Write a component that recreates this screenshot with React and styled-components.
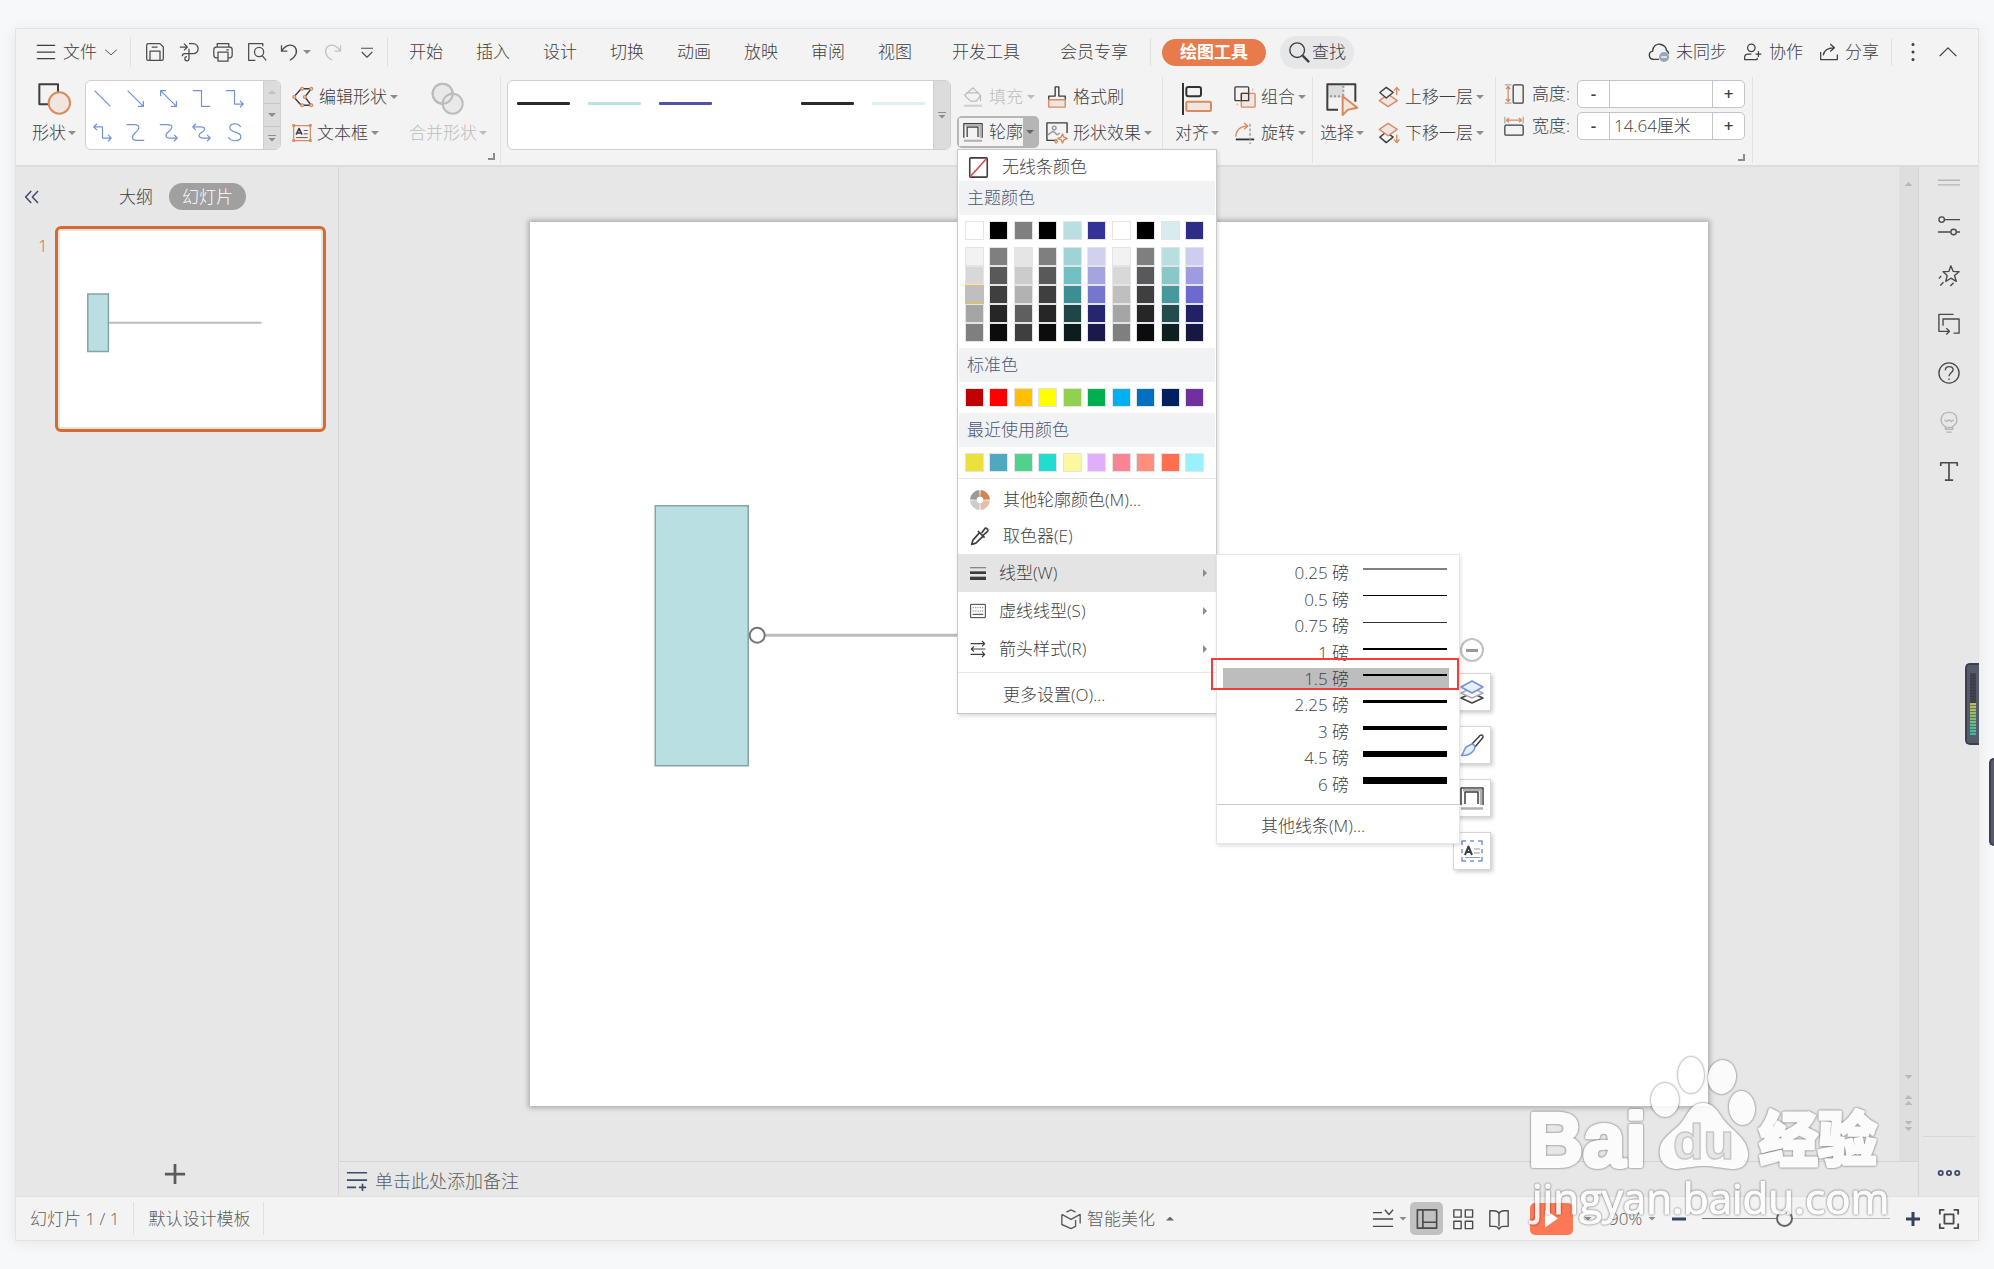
import React, { useState } from "react";
import styled, { createGlobalStyle } from "styled-components";

const GlobalStyle = createGlobalStyle`
  * {
    box-sizing: border-box;
  }
  body {
    margin: 0;
    background: #f6f8fa;
    color: #3e3e3e;
    font-family: "Open Sans", "Noto Sans CJK SC", sans-serif;
    font-size: 17px;
    font-weight: 300;
    line-height: 24px;
  }
  button, input, select {
    margin: 0;
    padding: 0;
    border: 0;
    background: none;
    color: inherit;
    font: inherit;
  }
  button {
    cursor: pointer;
    white-space: nowrap;
  }
`;

const ORANGE = "#d98b5f";
const PEACH = "#f1e6df";

const icons = {
  menu: <path d="M1 4H23M1 12H23M1 20H23" />,
  chevronDown: <path d="M2 8L12 17L22 8" />,
  chevronUp: <path d="M2 17L12 7L22 17" />,
  save: (
    <>
      <path d="M2 4a2 2 0 0 1 2-2H18L22 6V20a2 2 0 0 1-2 2H4a2 2 0 0 1-2-2Z" />
      <path d="M6 22V11H18V22M8 6H15" />
    </>
  ),
  exportPdf: (
    <>
      <path d="M1 6H9M6 2L10 6L6 10" />
      <path d="M12 2H17a5.500 5.500 0 0 1 0 12H7a3 3 0 0 0-3 3" />
      <path d="M12 8V20a2.500 2.500 0 1 1-2.500-2.500" />
    </>
  ),
  print: (
    <>
      <path d="M5 6V2H19V6M6 19H4a3 3 0 0 1-3-3V9a3 3 0 0 1 3-3H20a3 3 0 0 1 3 3V16a3 3 0 0 1-3 3H18" />
      <path d="M6 12H18V23H6ZM16 9.500H19" />
    </>
  ),
  preview: (
    <>
      <path d="M10 22H2V2H19V5" />
      <circle cx="14.500" cy="12" r="5.500" />
      <path d="M18 16L23 22" />
    </>
  ),
  undo: <path d="M3 4V11H10M3 11C8 3 15 2 19 6C23 11 21 17 13 22" />,
  redo: <path d="M21 4V11H14M21 11C16 3 9 2 5 6C1 11 3 17 11 22" />,
  moreDown: <path d="M4 7H20M5 12L12 19L19 12" />,
  search: (
    <>
      <circle cx="10" cy="10" r="8" />
      <path d="M16 16L23 23" strokeWidth="2.500" />
    </>
  ),
  cloud: (
    <>
      <path d="M12 20H6a4.500 4.500 0 0 1-1-8.900C5 6 9 3 13 3.500C17 4 20 7 20 10C21.500 11 22.500 12 22.500 14" />
      <circle cx="17.500" cy="17.500" r="5.500" fill="#9aa5b8" stroke="none" />
      <path d="M14.500 17.500H20.500" stroke="#fff" />
    </>
  ),
  person: (
    <>
      <circle cx="10" cy="7" r="4.500" />
      <path d="M10 14.500H6a4 4 0 0 0-4 4V21H17V19M15 14.500H22M18.500 11V18" />
    </>
  ),
  share: <path d="M2 12V21H22V15M5 16C6 10 11 7 18 7M13.500 2.500L18.500 7L13.500 11.500" />,
  dots: (
    <g fill="currentColor" stroke="none">
      <circle cx="12" cy="2" r="2" />
      <circle cx="12" cy="12" r="2" />
      <circle cx="12" cy="22" r="2" />
    </g>
  ),
  shapes: (
    <>
      <path d="M1 1H15V16H1Z" />
      <circle cx="16" cy="15" r="8" fill={PEACH} stroke={ORANGE} />
    </>
  ),
  merge: (
    <g fill="#e9e9e9">
      <circle cx="8" cy="8" r="7.500" />
      <circle cx="15.500" cy="15.500" r="7.500" />
      <circle cx="8" cy="8" r="7.500" fill="none" />
    </g>
  ),
  editShape: (
    <>
      <path d="M10 3L2 12L10 21M10 3H21L14 12L21 21H10" />
      <g stroke={ORANGE} fill={PEACH}>
        <circle cx="11" cy="3" r="1.500" />
        <circle cx="21" cy="3" r="1.500" />
        <circle cx="2.500" cy="12" r="1.500" />
        <circle cx="14" cy="12" r="1.500" />
        <circle cx="11" cy="21" r="1.500" />
        <circle cx="21" cy="21" r="1.500" />
      </g>
    </>
  ),
  textBox: (
    <>
      <path d="M2 3H22V21H2Z" stroke={ORANGE} />
      <g stroke={ORANGE} fill="#f3f3f3">
        <path d="M1 2h2v2h-2zM21 2h2v2h-2zM1 20h2v2h-2zM21 20h2v2h-2z" />
      </g>
      <path d="M5 14L8.500 6.500L12 14M6 12H11" strokeWidth="1.800" />
      <path d="M14 9H19M14 13H19M5 17.500H19" strokeWidth="1" />
    </>
  ),
  bucket: (
    <>
      <path d="M12 1L2 10L9 17H16L21 10Z" />
      <path d="M4 7H19M21 10V17" />
      <path d="M1 22.500H23" strokeWidth="2.500" stroke="#d0d0d0" />
    </>
  ),
  outline: (
    <>
      <path d="M1 19V2H23V19" strokeWidth="1.500" />
      <path d="M21 19V4H3" strokeWidth="2.500" stroke="#b0b0b0" />
      <path d="M5 18V6H18V18" strokeWidth="1.500" />
      <path d="M1 22.500H23" strokeWidth="2.500" stroke="#b0b0b0" />
    </>
  ),
  brush: (
    <>
      <path d="M10 1H14V11H21V15H3V11H10Z" />
      <path d="M3 15H21V23H3Z" stroke={ORANGE} fill={PEACH} />
    </>
  ),
  effect: (
    <>
      <path d="M12 20H1V1H23V12" />
      <path d="M2 14L8 10L12 14L15 12" stroke="#999" />
      <circle cx="9" cy="6.500" r="2" stroke="#999" />
      <path d="M18 13L19.500 16.500L23 18L19.500 19.500L18 23L16.500 19.500L13 18L16.500 16.500ZM11 19L12.500 21L11 23L9.500 21Z" stroke={ORANGE} />
    </>
  ),
  align: (
    <>
      <path d="M1.500 0V24" strokeWidth="1.500" stroke="#333" />
      <rect x="4" y="3" width="11" height="7" rx="1.500" strokeWidth="1.500" stroke="#333" />
      <rect x="4" y="14" width="18.500" height="7" rx="1" fill={PEACH} stroke={ORANGE} strokeWidth="1.500" />
    </>
  ),
  group: (
    <>
      <rect x="1" y="1" width="15" height="15" rx="1" />
      <rect x="8" y="8" width="15" height="15" rx="1" fill={PEACH} stroke={ORANGE} />
      <path d="M8 16V8H16V16Z" />
      <path d="M20 4h1M3 20h1" stroke={ORANGE} strokeWidth="2" />
    </>
  ),
  rotate: (
    <>
      <path d="M2 16C2 9 7 4.500 14 4.500M11 1L15 4.500L11 8" stroke={ORANGE} />
      <path d="M2 19H22" stroke="#333" strokeWidth="2" />
      <path d="M17.500 2V24" stroke="#999" strokeDasharray="3 2" />
    </>
  ),
  select: (
    <>
      <path d="M1 1H13V11H1Z" fill="#dcdcdc" stroke="none" />
      <path d="M9 20H1V1H22V14" />
      <path d="M3 10H13M13 2V10" stroke="#999" strokeDasharray="1.500 1.500" />
      <path d="M12.500 10V24L16.500 20L23.500 18.500Z" stroke={ORANGE} fill={PEACH} />
    </>
  ),
  moveUp: (
    <>
      <path d="M11 9L21 16L11 22.500L1.500 16Z" fill={PEACH} stroke={ORANGE} />
      <path d="M9 1.500L16.500 7L9 13L2 7Z" fill="#f3f3f3" />
      <path d="M20.500 10V2M17.500 5L20.500 1.500L23.500 5" stroke={ORANGE} />
    </>
  ),
  moveDown: (
    <>
      <path d="M9 11L16.500 16.500L9 22.500L2 16.500Z" />
      <path d="M11 1.500L21 8L11 15L1.500 8Z" fill={PEACH} stroke={ORANGE} />
      <path d="M20.500 14V22M17.500 19L20.500 22.500L23.500 19" stroke={ORANGE} />
    </>
  ),
  height: (
    <>
      <rect x="11" y="1" width="12" height="22" rx="1.500" />
      <path d="M5 3V21M2.500 6L5 3L7.500 6M2.500 18L5 21L7.500 18" stroke={ORANGE} />
      <path d="M1 1H9M1 23H9" stroke="#aaa" />
    </>
  ),
  width: (
    <>
      <rect x="1" y="11" width="22" height="12" rx="1.500" />
      <path d="M3 5H21M6 2.500L3 5L6 7.500M18 2.500L21 5L18 7.500" stroke={ORANGE} />
      <path d="M1 1V9M23 1V9" stroke="#aaa" />
    </>
  ),
  noLine: (
    <>
      <rect x="2" y="1" width="20" height="22" rx="1" strokeWidth="1.800" />
      <path d="M2.500 22.500L21.500 1.500" stroke="#d9484c" strokeWidth="1.800" />
    </>
  ),
  wheel: (
    <g strokeWidth="8" strokeLinecap="butt">
      <path d="M4 11.500A8 8 0 0 1 11.500 4" stroke="#9b9b9b" />
      <path d="M12.500 4A8 8 0 0 1 20 11.500" stroke="#cf8653" />
      <path d="M20 12.500A8 8 0 0 1 12.500 20" stroke="#e6bfa9" />
      <path d="M11.500 20A8 8 0 0 1 4 12.500" stroke="#cccccc" />
    </g>
  ),
  picker: (
    <>
      <path d="M11.500 8L3.500 17L2 22L7 20.500L15.500 12.500" strokeWidth="2" />
      <path d="M9.500 6L17.500 14M14 8.500L17.500 3.500C19 1 23 4.500 21 6.500L16 11" strokeWidth="2" />
    </>
  ),
  weight: (
    <g stroke="#3c3c3c" strokeLinecap="butt">
      <path d="M0 4H24" strokeWidth="2" stroke="#888" />
      <path d="M0 11.500H24" strokeWidth="4" />
      <path d="M0 20H24" strokeWidth="5" />
    </g>
  ),
  dash: (
    <>
      <path d="M1 2H23V22H1Z" />
      <path d="M4 7H20M4 12H20" strokeDasharray="2 1.500" stroke="#888" />
      <path d="M4 17H20" />
    </>
  ),
  arrows: (
    <path
      d="M1 4H22M18 0L22 4L18 8M23 12H2M6 8L2 12L6 16M1 20H22M18 16L22 20L18 24"
      strokeWidth="1.800"
    />
  ),
  collapse: <path d="M11 4L3.500 12L11 20M20 4L12.500 12L20 20" stroke="#3f4a66" strokeWidth="2" />,
  plus: <path d="M12 1V23M1 12H23" strokeWidth="3" />,
  note: <path d="M1 3H23M1 11H23M1 19H11M14 19H22M18 15V23" strokeWidth="1.800" />,
  cube: <path d="M7 4.500L12 2L17 4.500M2 7V18L12 22.500L17 20V13M22 17V7L12 12.500L2 7" />,
  listCheck: <path d="M1 5H11M1 12H23M1 20H23M14 2L18.500 7L23 2" />,
  normalView: <path d="M1.500 2H22.500V22H1.500ZM7.500 2V22M7.500 15.500H22.500" strokeWidth="1.800" />,
  grid: <path d="M2 2H10V10H2ZM14.500 2H22.500V10H14.500ZM2 14.500H10V22.500H2ZM14.500 14.500H22.500V22.500H14.500Z" />,
  book: <path d="M12 6C11 4 9 3 6 3H2V20H7C9 20 11 21 12 23C13 21 15 20 17 20H22V3H18C15 3 13 4 12 6V20" />,
  fit: <path d="M2 7V2H7M17 2H22V7M22 17V22H17M7 22H2V17M7 7H17V17H7Z" strokeWidth="2" />,
  handle: <path d="M0 9H24M0 14H24" />,
  sliders: (
    <>
      <circle cx="4" cy="5" r="3" />
      <path d="M7 5H24M0 18.500H14M20 18.500H24" />
      <circle cx="17" cy="18.500" r="3" />
    </>
  ),
  star: (
    <>
      <path d="M14 2L16.500 8L23 8.500L18 12.500L20 19L14 15.500L8.500 19L10 12.500L5.500 8.500L12 8Z" />
      <path d="M3.500 13L1 16M6 20L2.500 23.500M17 20.500L13.500 24" />
    </>
  ),
  transition: <path d="M17 1.500H1V20H12M9 16.500L12.500 20L9 23.500M5.500 14V6.500H23V22H17" />,
  help: (
    <>
      <circle cx="12" cy="12" r="11" />
      <path d="M8 9C8 3.500 16.500 4 16.500 8.500C16.500 11.500 12 12 12 15.500M12 18V19.500" />
    </>
  ),
  bulb: (
    <>
      <path d="M8 17C1 13 2 1.500 12 1.500C22 1.500 23 13 16 17V20H8ZM8 18H16M9 23H15" />
      <path d="M7 9.500L9.500 11.500L12 9.500L14.500 11.500L17 9.500" />
    </>
  ),
  text: <path d="M3 6.500V3H21V6.500M12 3V22M7.500 22H16.500" strokeWidth="1.800" />,
  rings: (
    <g strokeWidth="2">
      <circle cx="3" cy="12" r="2.300" />
      <circle cx="12" cy="12" r="2.300" />
      <circle cx="21" cy="12" r="2.300" />
    </g>
  ),
  layers: (
    <>
      <path d="M12 13L23 18L12 23L1 18Z" fill="#fff" stroke="#444" />
      <path d="M12 8L23 13L12 18L1 13Z" fill="#fff" stroke="#aaa" />
      <path d="M12 1L23 7L12 13L1 7Z" fill="#e8eefa" stroke="#6f97dc" />
    </>
  ),
  paint: (
    <>
      <path d="M12 11L20 2.500C22 1 24 3 22.500 5L15 14" />
      <path d="M12 11C15 12 15 13 15 14L14 17C11 21 6 23 1.500 22.500C5 19 3 15 8 13Z" fill="#e8eefa" stroke="#6f97dc" />
    </>
  ),
  textFrame: (
    <>
      <path d="M6 2H2V6M10 2H14M18 2H22V6M22 10V14M22 18V22H18M14 22H10M6 22H2V18M2 14V10" stroke="#6f97dc" strokeWidth="1.500" />
      <path d="M5 16L8.500 7.500L12 16M6 13H11" strokeWidth="2" />
      <path d="M14 10H20M14 14H20M5 18.500H20" stroke="#999" strokeWidth="1" />
    </>
  ),
};

const connectors = [
  "M2 2L22 22",
  "M2 2L22 22M22 15V22H15",
  "M2 2L22 22M22 15V22H15M2 9V2H9",
  "M1 2H12V22H23",
  "M1 2H12V19H23M19 15L23 19L19 23",
  "M1 5H12V19H23M19 15L23 19L19 23M5 1L1 5L5 9",
  "M1 2H10C20 2 16 9 12 12C7 16 6 22 14 22H23",
  "M1 2H10C20 2 16 8 12 11C7 15 8 19 14 19H23M19 15L23 19L19 23",
  "M1 5H10C18 5 17 9 12 12C7 15 8 19 14 19H23M19 15L23 19L19 23M5 1L1 5L5 9",
  "M20 5C16 -1 6 0 6 6C6 13 20 10 20 17C20 24 8 24 4 18",
];

const Glyph = styled.svg`
  flex: none;
  display: block;
  width: ${(p) => p.$size}px;
  height: ${(p) => p.$size}px;
  fill: none;
  stroke: currentColor;
  stroke-width: 1.5;
  stroke-linejoin: round;
  overflow: visible;
`;

const Icon = ({ name, size = 22 }) => (
  <Glyph viewBox="0 0 24 24" $size={size} aria-hidden="true">
    {icons[name]}
  </Glyph>
);

const Caret = styled.span`
  flex: none;
  width: 8px;
  height: 4px;
  background: ${(p) => p.$color || "#8c8c8c"};
  clip-path: ${(p) =>
    p.$up
      ? "polygon(0 100%, 100% 100%, 50% 0)"
      : "polygon(0 0, 100% 0, 50% 100%)"};
`;

const Page = styled.div`
  position: relative;
  display: flex;
  min-height: 100vh;
  padding: 28px 15px;
`;

const Window = styled.div`
  position: relative;
  flex: 1;
  min-width: 0;
  display: flex;
  flex-direction: column;
  border: 1px solid #e2e3e5;
  background: #e7e7e7;
  box-shadow: 0 2px 14px rgba(0, 0, 0, 0.08);
`;

const Ribbon = styled.header`
  position: relative;
  z-index: 5;
  background: #f3f3f3;
  border-bottom: 2px solid #dcdcdc;
`;

const TopRow = styled.div`
  display: flex;
  align-items: center;
  height: 46px;
  padding: 0 20px;
`;

const Divider = styled.span`
  flex: none;
  width: 1px;
  height: ${(p) => p.$height || 30}px;
  margin: ${(p) => p.$margin || "0 12px"};
  background: #e0e0e0;
`;

const FileButton = styled.button`
  display: flex;
  align-items: center;
  gap: 7px;
`;

const QuickBar = styled.div`
  display: flex;
  align-items: center;
  gap: 10px;
`;

const QuickButton = styled.button`
  display: flex;
  align-items: center;
  justify-content: center;
  gap: 4px;
  min-width: 24px;
  color: ${(p) => (p.$muted ? "#c3c3c3" : "#4c4c4c")};
`;

const Tabs = styled.nav`
  display: flex;
  gap: 33px;
  margin-left: 9px;
  a {
    color: inherit;
    text-decoration: none;
    white-space: nowrap;
  }
  a.long {
    margin-left: 7px;
  }
`;

const ActiveTab = styled.button`
  height: 27px;
  padding: 0 18px;
  border-radius: 14px;
  background: #e77b4c;
  color: #fff;
  font-weight: 700;
`;

const FindButton = styled.button`
  display: flex;
  align-items: center;
  gap: 2px;
  height: 33px;
  margin-left: 14px;
  padding: 0 8px;
  border-radius: 17px;
  background: #e6e7e9;
`;

const Account = styled.div`
  display: flex;
  align-items: center;
  gap: 16px;
  margin-left: auto;
  button {
    display: flex;
    align-items: center;
    gap: 6px;
  }
`;

const ToolRow = styled.div`
  display: flex;
  align-items: flex-start;
  height: 90px;
  padding: 4px 16px 0;
`;

const Rule = styled.span`
  flex: none;
  width: 1px;
  height: 86px;
  margin: -2px ${(p) => p.$after}px 0 ${(p) => p.$before}px;
  background: #e2e2e2;
`;

const BigTool = styled.button`
  display: flex;
  flex-direction: column;
  align-items: center;
  color: ${(p) => (p.$muted ? "#bcbcbc" : "inherit")};
  > svg {
    margin: 4px 0 0;
  }
  > span {
    display: flex;
    align-items: center;
    gap: 2px;
    height: 36px;
  }
`;

const ToolColumn = styled.div`
  display: flex;
  flex-direction: column;
  margin-left: ${(p) => p.$left || 0}px;
`;

const Tool = styled.button`
  display: flex;
  align-items: center;
  gap: 5px;
  height: 36px;
  color: ${(p) => (p.$muted ? "#bcbcbc" : "inherit")};
  > span {
    margin-left: -2px;
  }
`;

const Gallery = styled.div`
  display: flex;
  flex: none;
  height: 70px;
  margin: 1px 11px 0 9px;
  border: 1px solid #cfcfcf;
  border-radius: 6px;
  background: #fff;
  overflow: hidden;
`;

const ShapeGrid = styled.div`
  display: grid;
  grid-template-columns: repeat(5, 33px);
  width: 177px;
  color: #7093d6;
  button {
    display: grid;
    place-items: center;
  }
`;

const GallerySide = styled.div`
  display: flex;
  flex-direction: column;
  width: 17px;
  border-left: 1px solid #cfcfcf;
  background: #dcdcdc;
  button {
    flex: 1;
    display: flex;
    flex-direction: column;
    align-items: center;
    justify-content: center;
    gap: 2px;
  }
  button + button {
    border-top: 1px solid #c6c6c6;
  }
`;

const Bar = styled.span`
  width: 8px;
  height: 1px;
  background: #8c8c8c;
`;

const StyleGallery = styled(Gallery)`
  margin: 1px 6px 0 0;
`;

const StyleList = styled.div`
  display: flex;
  gap: 18px;
  width: 425px;
  padding: 21px 9px 0;
`;

const StyleSample = styled.button`
  flex: none;
  width: 53px;
  height: 3px;
  border-radius: 1px;
  background: ${(p) => p.$color};
`;

const CornerMark = styled.button`
  flex: none;
  align-self: flex-end;
  width: 7px;
  height: 7px;
  margin: ${(p) => p.$margin};
  border: solid #8c8c8c;
  border-width: 0 2px 2px 0;
`;

const FillTool = styled(Tool)`
  gap: 6px;
  padding-left: 6px;
`;

const OutlineAnchor = styled.div`
  position: relative;
`;

const OutlineTool = styled.button`
  display: flex;
  align-items: center;
  width: 82px;
  height: 32px;
  margin-top: 1px;
  border: 2px solid #b5b5b5;
  border-radius: 5px;
  background: #b5b5b5;
  span.face {
    display: flex;
    align-items: center;
    gap: 6px;
    height: 28px;
    padding: 0 0 0 4px;
    margin-right: 3px;
    background: #f3f3f3;
  }
`;

const SizeGroup = styled.div`
  display: flex;
  flex-direction: column;
  gap: 4px;
  padding-top: 1px;
`;

const SizeRow = styled.div`
  display: flex;
  align-items: center;
  gap: 8px;
  label {
    width: 37px;
    white-space: nowrap;
  }
`;

const Spinner = styled.div`
  display: flex;
  width: 168px;
  height: 28px;
  border: 1px solid #c4c4c4;
  border-radius: 5px;
  background: #fff;
  button {
    width: 31px;
    font-weight: 600;
    line-height: 20px;
  }
  input {
    flex: 1;
    min-width: 0;
    padding: 0 4px;
    border: solid #c4c4c4;
    border-width: 0 1px;
    outline: none;
  }
`;

const Menu = styled.div`
  position: absolute;
  top: 34px;
  left: 0;
  z-index: 10;
  width: 260px;
  border: 1px solid #c9c9c9;
  background: #fff;
  box-shadow: 1px 2px 4px rgba(0, 0, 0, 0.15);
`;

const MenuItem = styled.button`
  display: flex;
  align-items: center;
  width: 100%;
  height: ${(p) => p.$height || 38}px;
  padding: ${(p) => p.$top || 0}px 9px 0 ${(p) => p.$left || 12}px;
  gap: 13px;
  background: ${(p) => (p.$active ? "#e4e4e4" : "none")};
  .arrow {
    width: 4px;
    height: 8px;
    margin-left: auto;
    background: #8c8c8c;
    clip-path: polygon(0 0, 100% 50%, 0 100%);
  }
`;

const MenuHeading = styled.div`
  height: 34px;
  margin: 0 1px;
  padding-left: 8px;
  background: #f0f2f4;
  color: #4b5875;
  line-height: 33px;
`;

const Swatches = styled.div`
  display: grid;
  grid-template-columns: repeat(10, 19px);
  justify-content: space-between;
  padding: ${(p) => p.$padding || "6px 12px 6px 7px"};
`;

const Swatch = styled.button`
  height: 19px;
  border: 1px solid ${(p) => (p.$picked ? "#fbb83b" : "#e2e4e8")};
  background: ${(p) => p.$color};
`;

const MenuLine = styled.div`
  height: 1px;
  margin: ${(p) => p.$margin || "0"};
  background: ${(p) => p.$color || "#e8e8e8"};
`;

const SubmenuAnchor = styled.div`
  position: relative;
`;

const Submenu = styled.div`
  position: absolute;
  top: 0;
  left: 258px;
  width: 244px;
  padding-top: 5px;
  border: 1px solid #e6e6e6;
  background: #fff;
  box-shadow: 1px 2px 4px rgba(0, 0, 0, 0.12);
`;

const WeightList = styled.div`
  display: grid;
  grid-auto-rows: 1fr;
  height: 238px;
  margin: 0 10px 0 6px;
`;

const WeightItem = styled.button`
  position: relative;
  display: flex;
  align-items: center;
  justify-content: flex-end;
  gap: 14px;
  align-self: center;
  height: ${(p) => (p.$active ? 22 : 26)}px;
  padding-right: 2px;
  background: ${(p) => (p.$active ? "#bdbdbd" : "none")};
`;

const WeightSample = styled.span`
  width: 84px;
  height: ${(p) => p.$weight}px;
  margin-bottom: 8px;
  background: ${(p) => p.$color || "#000"};
`;

const RedFrame = styled.span`
  position: absolute;
  z-index: 2;
  top: -10px;
  right: -10px;
  bottom: 0;
  left: -12px;
  border: 2px solid #fa3a38;
`;

const SubmenuFooter = styled.button`
  display: block;
  width: 100%;
  height: 38px;
  padding: 3px 0 0 44px;
  text-align: left;
`;

const Body = styled.main`
  flex: 1;
  display: flex;
`;

const Outline = styled.aside`
  display: flex;
  flex-direction: column;
  width: 323px;
  border-right: 1px solid #d8d8d8;
`;

const OutlineHead = styled.div`
  display: flex;
  align-items: center;
  height: 59px;
  padding: 0 7px;
  .tab {
    margin-left: 78px;
  }
`;

const SlidePill = styled.button`
  height: 27px;
  margin-left: 16px;
  padding: 0 13px;
  border-radius: 14px;
  background: #a0a0a0;
  color: #fff;
`;

const ThumbRow = styled.div`
  display: flex;
  gap: 7px;
  padding: 0 12px 0 22px;
  color: #d66b2d;
  line-height: 40px;
`;

const Thumb = styled.button`
  flex: 1;
  padding: 2px;
  border: 3px solid #d66b2d;
  border-radius: 6px;
  background: #e4e4e4;
`;

const AddSlide = styled.button`
  display: grid;
  place-items: center;
  align-self: flex-start;
  height: 44px;
  margin: auto 0 0 148px;
  color: #5a5a5a;
`;

const Editor = styled.section`
  flex: 1;
  min-width: 0;
  display: flex;
  flex-direction: column;
`;

const StageRow = styled.div`
  flex: 1;
  display: flex;
`;

const Stage = styled.div`
  flex: 1;
  display: grid;
  align-items: center;
  padding: 55px 191px;
`;

const Slide = styled.div`
  position: relative;
  background: #fff;
  box-shadow: 0 0 5px 2px rgba(0, 0, 0, 0.25);
`;

const Drawing = styled.svg`
  display: block;
  width: 100%;
  aspect-ratio: 4 / 3;
  background: #fff;
`;

const FloatBar = styled.div`
  position: absolute;
  top: 416px;
  left: 923px;
  display: flex;
  flex-direction: column;
  align-items: center;
  gap: 15px;
`;

const FloatClose = styled.button`
  display: grid;
  place-items: center;
  width: 24px;
  height: 24px;
  margin-bottom: -4px;
  border: 2px solid #c2c2c2;
  border-radius: 50%;
  background: #fff;
  &::before {
    content: "";
    width: 12px;
    height: 3px;
    background: #999;
  }
`;

const FloatButton = styled.button`
  display: grid;
  place-items: center;
  width: 38px;
  height: 38px;
  border: 1px solid #d6d6d6;
  background: #fff;
  box-shadow: 2px 2px 4px rgba(0, 0, 0, 0.2);
`;

const ScrollBar = styled.div`
  display: flex;
  flex-direction: column;
  align-items: center;
  gap: 16px;
  width: 20px;
  padding: 15px 0 30px;
  border-right: 1px solid #d4d4d4;
  background: #dedede;
  button {
    display: flex;
    flex-direction: column;
    gap: 2px;
  }
  button:first-child {
    margin-bottom: auto;
  }
`;

const Notes = styled.label`
  display: flex;
  align-items: center;
  gap: 7px;
  height: 35px;
  padding: 4px 7px 0;
  border-top: 1px solid #d4d4d4;
  border-right: 1px solid #d4d4d4;
  color: #3f4a66;
  input {
    flex: 1;
    font-size: 18px;
    outline: none;
  }
  input::placeholder {
    color: #5c5c5c;
    opacity: 1;
  }
`;

const SideBar = styled.aside`
  display: flex;
  flex-direction: column;
  align-items: center;
  gap: 27px;
  width: 59px;
  padding: 5px 0 12px;
  color: #4a4a4a;
  .light {
    color: #b5b5b5;
  }
  .grip {
    margin-bottom: -6px;
  }
  .last {
    width: 52px;
    margin-top: auto;
    padding: 25px 15px 0;
    border-top: 1px solid #d8d8d8;
    color: #3c4a6b;
  }
`;

const StatusBar = styled.footer`
  display: flex;
  align-items: center;
  height: 44px;
  padding: 0 10px 0 14px;
  background: #f3f3f3;
  border-top: 1px solid #e0e0e0;
  color: #5c5c5c;
  white-space: nowrap;
`;

const Beautify = styled.button`
  display: flex;
  align-items: center;
  gap: 5px;
  margin: 0 198px 0 auto;
  > span {
    margin-left: 6px;
  }
`;

const ViewButton = styled.button`
  display: flex;
  align-items: center;
  justify-content: center;
  gap: 5px;
  min-width: 33px;
  height: 33px;
  margin-right: 3px;
  border-radius: 5px;
  background: ${(p) => (p.$active ? "#c1c1c1" : "none")};
  color: #4a4a4a;
`;

const PlayButton = styled.button`
  display: grid;
  place-items: center;
  width: 43px;
  height: 32px;
  margin: 0 11px 0 12px;
  border-radius: 5px;
  background: #fd7857;
  &::before {
    content: "";
    width: 13px;
    height: 18px;
    background: #fff;
    clip-path: polygon(0 0, 100% 50%, 0 100%);
  }
`;

const ZoomSelect = styled.select`
  appearance: none;
  margin: 0 5px 0 17px;
`;

const ZoomGroup = styled.div`
  display: flex;
  align-items: center;
  gap: 16px;
  margin: 0 12px 0 16px;
`;

const ZoomStep = styled.button`
  display: grid;
  place-items: center;
  width: 14px;
  height: 24px;
  color: #36435f;
`;

const Range = styled.input`
  appearance: none;
  width: 188px;
  height: 24px;
  background: linear-gradient(90deg, #777 43%, #bdbdbd 43%) center / 100% 1px
    no-repeat;
  &::-webkit-slider-thumb {
    appearance: none;
    width: 17px;
    height: 17px;
    border: 2px solid #666;
    border-radius: 50%;
    background: #f3f3f3;
  }
`;

const SyncTab = styled.div`
  position: absolute;
  top: 634px;
  right: -1px;
  display: grid;
  place-items: center;
  width: 14px;
  height: 82px;
  border: 2px solid #3c404e;
  border-right: 0;
  border-radius: 5px 0 0 5px;
  background: #555b6b;
  &::before {
    content: "";
    width: 6px;
    height: 62px;
    background: repeating-linear-gradient(
        180deg,
        transparent 0 2px,
        rgba(50, 54, 66, 0.5) 2px 3px
      ),
      linear-gradient(180deg, #41444f 48%, #c4bf55 48%, #7dbb7d 75%, #3fb8a8);
  }
`;

const EdgeTab = styled.div`
  position: absolute;
  top: 758px;
  right: 0;
  width: 5px;
  height: 88px;
  border: 2px solid #3c404e;
  border-right: 0;
  border-radius: 5px 0 0 5px;
  background: #555b6b;
`;

const Watermark = styled.svg`
  position: absolute;
  right: 78px;
  bottom: 14px;
  z-index: 20;
  width: 380px;
  height: 186px;
  pointer-events: none;
  overflow: visible;
  opacity: 0.86;
  filter: drop-shadow(0 0 1px rgba(0, 0, 0, 0.45))
    drop-shadow(0 0 1px rgba(0, 0, 0, 0.25));
`;

const tabs = ["开始", "插入", "设计", "切换", "动画", "放映", "审阅", "视图"];

const lineStyles = ["#2b2b2b", "#bfe0e3", "#5252a6", "#fff", "#2b2b2b", "#dceeef"];

const themeTop = [
  "#fff", "#000", "#7f7f7f", "#000", "#b9dfe2",
  "#333396", "#fff", "#000", "#d8ebed", "#2d2c87",
];

const themeShades = [
  ["#f2f2f2", "#7f7f7f", "#e5e5e5", "#7f7f7f", "#9fd4d7", "#d1d1ef", "#f2f2f2", "#7f7f7f", "#b9dede", "#cecdef"],
  ["#d8d8d8", "#595959", "#cccccc", "#595959", "#72c0c4", "#a4a4df", "#d8d8d8", "#595959", "#8ac8c8", "#9e9cdf"],
  ["#bfbfbf", "#3f3f3f", "#b2b2b2", "#3f3f3f", "#3c8e93", "#7676cf", "#bfbfbf", "#3f3f3f", "#47999b", "#6c6ace"],
  ["#a5a5a5", "#262626", "#5f5f5f", "#262626", "#1e4649", "#262670", "#a5a5a5", "#262626", "#234c4d", "#222165"],
  ["#7f7f7f", "#0c0c0c", "#3f3f3f", "#0c0c0c", "#0d1c1d", "#19194b", "#7f7f7f", "#0c0c0c", "#0e1f1f", "#171744"],
];

const standard = [
  "#c00000", "#ff0000", "#ffc000", "#ffff00", "#92d050",
  "#00b050", "#00b0f0", "#0070c0", "#002060", "#7030a0",
];

const recent = [
  "#eee03c", "#50a8c0", "#50d18c", "#22dccf", "#fbf8a0",
  "#e2adfc", "#fb8492", "#fd8f7c", "#fe6f50", "#9af1fb",
];

const weights = [
  { label: "0.25 磅", px: 2, color: "#808080" },
  { label: "0.5 磅", px: 1 },
  { label: "0.75 磅", px: 1, color: "#333" },
  { label: "1 磅", px: 2 },
  { label: "1.5 磅", px: 2 },
  { label: "2.25 磅", px: 3 },
  { label: "3 磅", px: 4 },
  { label: "4.5 磅", px: 6 },
  { label: "6 磅", px: 7 },
];

const SwatchRow = ({ colors, padding, picked }) => (
  <Swatches $padding={padding}>
    {colors.map((color, index) => (
      <Swatch
        key={index}
        $color={color}
        $picked={picked === index}
        aria-label={color}
      />
    ))}
  </Swatches>
);

const SlideDrawing = ({ main }) => (
  <Drawing viewBox="0 0 1178 884" aria-hidden="true">
    <path
      d="M220 413.500H909"
      stroke="#bdbdbd"
      strokeWidth={main ? 3 : 2}
      vectorEffect="non-scaling-stroke"
    />
    <rect
      x="125"
      y="284"
      width="93"
      height="260"
      fill="#b9dfe2"
      stroke="#86a3a6"
      strokeWidth="1.500"
      vectorEffect="non-scaling-stroke"
    />
    {main && (
      <circle cx="227" cy="413.500" r="7.500" fill="#fff" stroke="#777" strokeWidth="2" />
    )}
  </Drawing>
);

function WeightMenu() {
  const [weight, setWeight] = useState("1.5 磅");

  return (
    <Submenu>
      <WeightList>
        {weights.map((item) => (
          <WeightItem
            key={item.label}
            $active={item.label === weight}
            onClick={() => setWeight(item.label)}
          >
            {item.label}
            <WeightSample $weight={item.px} $color={item.color} />
            {item.label === weight && <RedFrame />}
          </WeightItem>
        ))}
      </WeightList>
      <MenuLine $margin="6px 0 0" $color="#c8c8c8" />
      <SubmenuFooter>其他线条(M)...</SubmenuFooter>
    </Submenu>
  );
}

function OutlineMenu() {
  return (
    <Menu>
      <MenuItem $height={31} $left={10} $top={3}>
        <Icon name="noLine" size={21} />
        无线条颜色
      </MenuItem>
      <MenuHeading>主题颜色</MenuHeading>
      <SwatchRow colors={themeTop} padding="6px 12px 7px 7px" />
      {themeShades.map((row, index) => (
        <SwatchRow
          key={index}
          colors={row}
          padding={index === 4 ? "0 12px 6px 7px" : "0 12px 0 7px"}
          picked={index === 2 ? 0 : undefined}
        />
      ))}
      <MenuHeading>标准色</MenuHeading>
      <SwatchRow colors={standard} />
      <MenuHeading>最近使用颜色</MenuHeading>
      <SwatchRow colors={recent} />
      <MenuLine $margin="0 0 3px" />
      <MenuItem $height={36}>
        <Icon name="wheel" size={20} />
        其他轮廓颜色(M)...
      </MenuItem>
      <MenuItem $height={36}>
        <Icon name="picker" size={20} />
        取色器(E)
      </MenuItem>
      <SubmenuAnchor>
        <MenuItem $active>
          <Icon name="weight" size={16} />
          线型(W)
          <span className="arrow" />
        </MenuItem>
        <WeightMenu />
      </SubmenuAnchor>
      <MenuItem>
        <Icon name="dash" size={16} />
        虚线线型(S)
        <span className="arrow" />
      </MenuItem>
      <MenuItem>
        <Icon name="arrows" size={16} />
        箭头样式(R)
        <span className="arrow" />
      </MenuItem>
      <MenuLine $margin="4px 0 0" />
      <MenuItem $height={40} $left={45} $top={3}>
        更多设置(O)...
      </MenuItem>
    </Menu>
  );
}

function ToolBar() {
  return (
    <ToolRow>
      <BigTool>
        <Icon name="shapes" size={32} />
        <span>
          形状
          <Caret />
        </span>
      </BigTool>
      <Gallery>
        <ShapeGrid>
          {connectors.map((d) => (
            <button key={d} aria-label="连接线">
              <Glyph viewBox="0 0 24 24" $size={19}>
                <path d={d} />
              </Glyph>
            </button>
          ))}
        </ShapeGrid>
        <GallerySide>
          <button aria-label="向上">
            <Caret $up $color="#c0c0c0" />
          </button>
          <button aria-label="向下">
            <Caret />
          </button>
          <button aria-label="更多形状">
            <Bar />
            <Caret />
          </button>
        </GallerySide>
      </Gallery>
      <ToolColumn>
        <Tool>
          <Icon name="editShape" />
          编辑形状
          <Caret />
        </Tool>
        <Tool>
          <Icon name="textBox" size={20} />
          文本框
          <Caret />
        </Tool>
      </ToolColumn>
      <ToolColumn $left={11}>
        <BigTool $muted>
          <Icon name="merge" size={32} />
          <span>
            合并形状
            <Caret $color="#bcbcbc" />
          </span>
        </BigTool>
      </ToolColumn>
      <CornerMark $margin="0 0 5px 1px" aria-label="形状选项" />
      <Rule $before={5} $after={6} />
      <StyleGallery>
        <StyleList>
          {lineStyles.map((color, index) => (
            <StyleSample key={index} $color={color} aria-label="线条样式" />
          ))}
        </StyleList>
        <GallerySide>
          <button aria-label="更多样式">
            <Bar />
            <Caret />
          </button>
        </GallerySide>
      </StyleGallery>
      <ToolColumn>
        <FillTool $muted>
          <Icon name="bucket" size={20} />
          填充
          <Caret $color="#bcbcbc" />
        </FillTool>
        <OutlineAnchor>
          <OutlineTool>
            <span className="face">
              <Icon name="outline" size={20} />
              轮廓
            </span>
            <Caret $color="#666" />
          </OutlineTool>
          <OutlineMenu />
        </OutlineAnchor>
      </ToolColumn>
      <ToolColumn $left={7}>
        <Tool>
          <Icon name="brush" />
          格式刷
        </Tool>
        <Tool>
          <Icon name="effect" />
          形状效果
          <Caret />
        </Tool>
      </ToolColumn>
      <Rule $before={10} $after={12} />
      <BigTool>
        <Icon name="align" size={32} />
        <span>
          对齐
          <Caret />
        </span>
      </BigTool>
      <ToolColumn $left={15}>
        <Tool>
          <Icon name="group" />
          组合
          <Caret />
        </Tool>
        <Tool>
          <Icon name="rotate" />
          旋转
          <Caret />
        </Tool>
      </ToolColumn>
      <Rule $before={6} $after={7} />
      <BigTool>
        <Icon name="select" size={32} />
        <span>
          选择
          <Caret />
        </span>
      </BigTool>
      <ToolColumn $left={14}>
        <Tool>
          <Icon name="moveUp" />
          上移一层
          <Caret />
        </Tool>
        <Tool>
          <Icon name="moveDown" />
          下移一层
          <Caret />
        </Tool>
      </ToolColumn>
      <Rule $before={11} $after={8} />
      <SizeGroup>
        <SizeRow>
          <Icon name="height" size={20} />
          <label htmlFor="shape-height">高度:</label>
          <Spinner>
            <button aria-label="减小高度">-</button>
            <input id="shape-height" type="text" />
            <button aria-label="增大高度">+</button>
          </Spinner>
        </SizeRow>
        <SizeRow>
          <Icon name="width" size={20} />
          <label htmlFor="shape-width">宽度:</label>
          <Spinner>
            <button aria-label="减小宽度">-</button>
            <input id="shape-width" type="text" defaultValue="14.64厘米" />
            <button aria-label="增大宽度">+</button>
          </Spinner>
        </SizeRow>
        <CornerMark $margin="10px 0 0" aria-label="大小选项" />
      </SizeGroup>
      <Rule $before={7} $after={0} />
    </ToolRow>
  );
}

function TitleBar() {
  return (
    <TopRow>
      <FileButton>
        <Icon name="menu" size={20} />
        文件
        <Icon name="chevronDown" size={14} />
      </FileButton>
      <Divider />
      <QuickBar>
        <QuickButton aria-label="保存">
          <Icon name="save" size={20} />
        </QuickButton>
        <QuickButton aria-label="输出为PDF">
          <Icon name="exportPdf" size={20} />
        </QuickButton>
        <QuickButton aria-label="打印">
          <Icon name="print" size={20} />
        </QuickButton>
        <QuickButton aria-label="打印预览">
          <Icon name="preview" size={20} />
        </QuickButton>
        <QuickButton aria-label="撤消">
          <Icon name="undo" size={20} />
          <Caret />
        </QuickButton>
        <QuickButton aria-label="恢复" $muted>
          <Icon name="redo" size={20} />
        </QuickButton>
        <QuickButton aria-label="自定义">
          <Icon name="moreDown" size={18} />
        </QuickButton>
      </QuickBar>
      <Divider $margin="0 12px 0 8px" />
      <Tabs>
        {tabs.map((tab) => (
          <a key={tab} href="#">
            {tab}
          </a>
        ))}
        <a href="#" className="long">
          开发工具
        </a>
        <a href="#" className="long">
          会员专享
        </a>
      </Tabs>
      <Divider $height={28} $margin="0 11px 0 22px" />
      <ActiveTab>绘图工具</ActiveTab>
      <FindButton>
        <Icon name="search" />
        查找
      </FindButton>
      <Account>
        <button>
          <Icon name="cloud" />
          未同步
        </button>
        <button>
          <Icon name="person" size={20} />
          协作
        </button>
        <button>
          <Icon name="share" size={20} />
          分享
        </button>
        <Divider $height={28} $margin="0 -4px" />
        <button aria-label="更多">
          <Icon name="dots" size={18} />
        </button>
        <button aria-label="收起功能区">
          <Icon name="chevronUp" size={20} />
        </button>
      </Account>
    </TopRow>
  );
}

function SlidePanel() {
  return (
    <Outline>
      <OutlineHead>
        <button aria-label="收起">
          <Icon name="collapse" size={18} />
        </button>
        <button className="tab">大纲</button>
        <SlidePill>幻灯片</SlidePill>
      </OutlineHead>
      <ThumbRow>
        <span>1</span>
        <Thumb aria-label="幻灯片 1">
          <SlideDrawing />
        </Thumb>
      </ThumbRow>
      <AddSlide aria-label="新建幻灯片">
        <Icon name="plus" size={22} />
      </AddSlide>
    </Outline>
  );
}

const floatIcons = ["layers", "paint", "outline", "textFrame"];
const sideIcons = ["sliders", "star", "transition", "help"];

function Workspace() {
  return (
    <Body>
      <SlidePanel />
      <Editor>
        <StageRow>
          <Stage>
            <Slide>
              <SlideDrawing main />
              <FloatBar>
                <FloatClose aria-label="收起" />
                {floatIcons.map((name) => (
                  <FloatButton key={name} aria-label={name}>
                    <Icon name={name} size={24} />
                  </FloatButton>
                ))}
              </FloatBar>
            </Slide>
          </Stage>
          <ScrollBar>
            <button aria-label="向上滚动">
              <Caret $up $color="#b9b9b9" />
            </button>
            <button aria-label="向下滚动">
              <Caret $color="#b9b9b9" />
            </button>
            <button aria-label="上一张">
              <Caret $up $color="#b9b9b9" />
              <Caret $up $color="#b9b9b9" />
            </button>
            <button aria-label="下一张">
              <Caret $color="#b9b9b9" />
              <Caret $color="#b9b9b9" />
            </button>
          </ScrollBar>
        </StageRow>
        <Notes>
          <Icon name="note" />
          <input type="text" placeholder="单击此处添加备注" aria-label="备注" />
        </Notes>
      </Editor>
      <SideBar>
        <span className="light grip">
          <Icon name="handle" />
        </span>
        {sideIcons.map((name) => (
          <button key={name} aria-label={name}>
            <Icon name={name} />
          </button>
        ))}
        <button className="light" aria-label="bulb">
          <Icon name="bulb" />
        </button>
        <button aria-label="text">
          <Icon name="text" />
        </button>
        <button className="last" aria-label="更多">
          <Icon name="rings" />
        </button>
      </SideBar>
    </Body>
  );
}

function Status() {
  const [zoom, setZoom] = useState(43);

  return (
    <StatusBar>
      <span>幻灯片 1 / 1</span>
      <Divider $height={33} $margin="0 14px" />
      <span>默认设计模板</span>
      <Divider $height={33} $margin="0 13px" />
      <Beautify>
        <Icon name="cube" />
        智能美化
        <Caret $up $color="#666" />
      </Beautify>
      <ViewButton aria-label="备注">
        <Icon name="listCheck" />
        <Caret />
      </ViewButton>
      <ViewButton $active aria-label="普通视图">
        <Icon name="normalView" />
      </ViewButton>
      <ViewButton aria-label="幻灯片浏览">
        <Icon name="grid" />
      </ViewButton>
      <ViewButton aria-label="阅读视图">
        <Icon name="book" />
      </ViewButton>
      <PlayButton aria-label="放映" />
      <Caret />
      <ZoomSelect aria-label="缩放比例" defaultValue="90%">
        <option>90%</option>
      </ZoomSelect>
      <Caret />
      <ZoomGroup>
        <ZoomStep aria-label="缩小">
          <Glyph viewBox="0 0 14 14" $size={14}>
            <path d="M0 7H14" strokeWidth="3" />
          </Glyph>
        </ZoomStep>
        <Range
          type="range"
          aria-label="缩放"
          value={zoom}
          onChange={(e) => setZoom(Number(e.target.value))}
        />
        <ZoomStep aria-label="放大">
          <Glyph viewBox="0 0 14 14" $size={14}>
            <path d="M0 7H14M7 0V14" strokeWidth="3" />
          </Glyph>
        </ZoomStep>
      </ZoomGroup>
      <ViewButton aria-label="适应窗口">
        <Icon name="fit" />
      </ViewButton>
    </StatusBar>
  );
}

const PawMark = () => (
  <Watermark viewBox="0 0 380 186" fill="#fff" stroke="#fff" strokeLinejoin="round">
    <g stroke="none">
      <ellipse cx="145" cy="60" rx="14" ry="17" />
      <ellipse cx="171" cy="35" rx="13" ry="18" />
      <ellipse cx="202" cy="37" rx="14" ry="17" transform="rotate(8 202 37)" />
      <ellipse cx="222" cy="68" rx="13" ry="17" transform="rotate(-6 222 68)" />
      <path d="M183 63C193 63 197 70 203 79C211 90 226 97 228 112C229 124 222 130 211 129C199 128 194 126 184 126C174 126 168 128 157 129C145 129 138 120 140 108C142 96 157 90 164 79C170 69 174 63 183 63Z" />
    </g>
    <g fontFamily="'Liberation Sans', sans-serif" fontWeight="700">
      <text x="8" y="126" fontSize="76" strokeWidth="4">
        Bai
      </text>
      <text x="153" y="119" fontSize="50" fill="#e6e6e6" stroke="#c4c4c4" strokeWidth="1.500">
        du
      </text>
    </g>
    <text x="239" y="121" fontSize="59" fontWeight="900" strokeWidth="3" fontFamily="'Noto Sans CJK SC', sans-serif">
      经验
    </text>
    <text x="12" y="174" fontSize="42" fontWeight="400" strokeWidth="1" fontFamily="'Open Sans', sans-serif">
      jingyan.baidu.com
    </text>
  </Watermark>
);

export default function App() {
  return (
    <>
      <GlobalStyle />
      <Page>
        <Window>
          <Ribbon>
            <TitleBar />
            <ToolBar />
          </Ribbon>
          <Workspace />
          <Status />
          <SyncTab />
          <PawMark />
        </Window>
        <EdgeTab />
      </Page>
    </>
  );
}
